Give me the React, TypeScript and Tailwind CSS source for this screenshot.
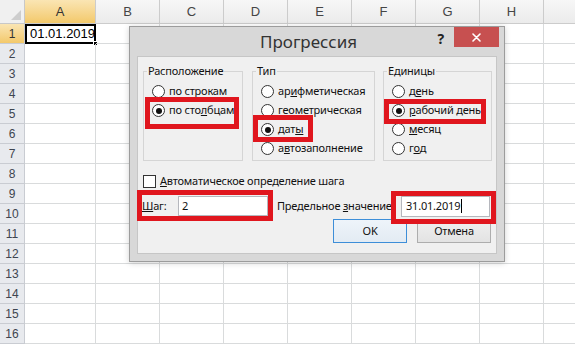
import React from 'react';

const cols = [
  { label: 'A', w: 'w-[71px]', sel: true },
  { label: 'B', w: 'w-[64px]' },
  { label: 'C', w: 'w-[64px]' },
  { label: 'D', w: 'w-[64px]' },
  { label: 'E', w: 'w-[64px]' },
  { label: 'F', w: 'w-[64px]' },
  { label: 'G', w: 'w-[64px]' },
  { label: 'H', w: 'w-[64px]' },
  { label: '', w: 'w-[64px]' },
];

function Sheet() {
  return (
    <div className="flex flex-col font-['Liberation_Sans',Arial,sans-serif]">
      <div className="flex h-[24px]">
        <div className="relative h-full w-[25px] shrink-0 border-r border-b border-[#c8c8c8] bg-[#f0f0f0]">
          <svg className="absolute right-[3px] bottom-[3px]" width="10" height="10" viewBox="0 0 10 10">
            <path d="M10 0 L10 10 L0 10 Z" fill="#cdcdcd" />
          </svg>
        </div>
        {cols.map((c, j) => (
          <div
            key={j}
            className={`${c.w} ${
              c.sel
                ? 'bg-linear-to-b from-[#fae5b3] to-[#f3c96a] text-[#333333]'
                : 'bg-linear-to-b from-[#f7f7f7] to-[#ebebeb] text-[#454545]'
            } flex h-full shrink-0 items-center justify-center border-r border-b border-[#cccccc] text-[13px]`}
          >
            {c.label}
          </div>
        ))}
      </div>
      {Array.from({ length: 16 }).map((_, i) => (
        <div key={i} className="flex h-[20px]">
          <div
            className={`flex h-full w-[25px] shrink-0 items-center justify-center border-r border-b border-[#c9ccd2] text-[12px] ${
              i === 0
                ? 'bg-linear-to-b from-[#fae5b3] to-[#f3c96a] text-[#333333]'
                : 'bg-[#e8eaee] text-[#3e4550]'
            }`}
          >
            {i + 1}
          </div>
          {cols.map((c, j) => (
            <div key={j} className={`${c.w} relative flex h-full shrink-0 items-center border-r border-b border-[#d9dbdc]`}>
              {i === 0 && j === 0 && (
                <>
                  <span className="pl-[5px] text-[13px] text-black">01.01.2019</span>
                  <div className="absolute left-0 top-0 -right-[1px] -bottom-[1px] border-2 border-black" />
                  <div className="absolute -right-[3px] -bottom-[3px] h-[5px] w-[5px] border border-white bg-black" />
                </>
              )}
            </div>
          ))}
        </div>
      ))}
    </div>
  );
}

function Radio({ checked }: { checked?: boolean }) {
  return (
    <span className="flex h-[13px] w-[13px] shrink-0 items-center justify-center rounded-full border border-[#333333] bg-white">
      {checked && <span className="h-[6px] w-[6px] rounded-full bg-[#111111]" />}
    </span>
  );
}

function Opt({ checked, children }: { checked?: boolean; children: React.ReactNode }) {
  return (
    <div className="flex h-[19px] items-center gap-[4px] pl-[8px]">
      <Radio checked={checked} />
      <span className="whitespace-nowrap">{children}</span>
    </div>
  );
}

function Group({ title, w, children }: { title: string; w: string; children: React.ReactNode }) {
  return (
    <fieldset className={`${w} h-[98px] shrink-0 border border-[#d5d5d5]`}>
      <legend className="ml-[3px] px-[1px] leading-[16px]">{title}</legend>
      <div className="pt-[3px]">{children}</div>
    </fieldset>
  );
}

function Dialog() {
  return (
    <div className="absolute left-[129px] top-[26px] flex h-[236px] w-[376px] flex-col border border-[#9c9c9c] bg-[#d8d8d8] font-['Noto_Sans',sans-serif] text-[11px] tracking-[-0.2px] text-[#111111] shadow-[0_1px_6px_rgba(0,0,0,0.18)]">
      <div className="flex h-[29px] shrink-0 items-start">
        <div className="ml-[130px] self-center text-[17px] leading-none tracking-normal text-[#333333]">Прогрессия</div>
        <div className="mt-[4px] ml-auto text-[14px] leading-[16px] font-bold text-[#222222]">?</div>
        <div className="mr-[5px] ml-[10px] flex h-[20px] w-[45px] items-center justify-center bg-[#c75050]">
          <svg width="9" height="9" viewBox="0 0 9 9">
            <path d="M1 1 L8 8 M8 1 L1 8" stroke="white" strokeWidth="1.6" strokeLinecap="round" />
          </svg>
        </div>
      </div>
      <div className="mx-[7px] mb-[7px] flex flex-1 flex-col border border-[#c6c6c6] bg-[#f0f0f0]">
        <div className="flex pt-[6px] pl-[5px]">
          <Group title="Расположение" w="w-[100px]">
            <Opt>по строкам</Opt>
            <Opt checked>
              по сто<span className="underline">л</span>бцам
            </Opt>
          </Group>
          <div className="ml-[9px]">
            <Group title="Тип" w="w-[123px]">
              <Opt>
                ар<span className="underline">и</span>фметическая
              </Opt>
              <Opt>геометрическая</Opt>
              <Opt checked>
                дат<span className="underline">ы</span>
              </Opt>
              <Opt>
                а<span className="underline">в</span>тозаполнение
              </Opt>
            </Group>
          </div>
          <div className="ml-[8px]">
            <Group title="Единицы" w="w-[109px]">
              <Opt>
                д<span className="underline">е</span>нь
              </Opt>
              <Opt checked>
                <span className="underline">р</span>абочий день
              </Opt>
              <Opt>
                <span className="underline">м</span>есяц
              </Opt>
              <Opt>
                г<span className="underline">о</span>д
              </Opt>
            </Group>
          </div>
        </div>
        <div className="mt-[12px] ml-[5px] flex h-[16px] items-center gap-[4px]">
          <span className="h-[13px] w-[13px] shrink-0 border border-[#333333] bg-white" />
          <span className="whitespace-nowrap">
            <span className="underline">А</span>втоматическое определение шага
          </span>
        </div>
        <div className="mt-[7px] flex h-[20px] items-center pl-[4px]">
          <span className="w-[36px] shrink-0">
            <span className="underline">Ш</span>аг:
          </span>
          <div className="flex h-[20px] w-[90px] shrink-0 items-center border border-[#b5b7bd] bg-white pl-[3px]">2</div>
          <span className="ml-[9px] w-[124px] shrink-0 whitespace-nowrap">
            Предельное <span className="underline">з</span>начение:
          </span>
          <div className="flex h-[21px] w-[89px] shrink-0 items-center border border-[#b5b7bd] bg-white pl-[4px]">
            31.01.2019
            <span className="ml-[1px] h-[14px] w-[1px] bg-black" />
          </div>
        </div>
        <div className="mt-[3px] flex justify-end gap-[10px] pr-[5px]">
          <div className="flex h-[24px] w-[74px] items-center justify-center border border-[#3d8ed8] bg-linear-to-b from-[#eef4fa] to-[#e3ebf3]">
            OK
          </div>
          <div className="flex h-[24px] w-[74px] items-center justify-center border border-[#adadad] bg-linear-to-b from-[#efefef] to-[#e3e3e3]">
            Отмена
          </div>
        </div>
      </div>
    </div>
  );
}

export default function App() {
  return (
    <div className="relative h-[345px] w-[575px] overflow-hidden bg-white">
      <Sheet />
      <Dialog />
      <div className="pointer-events-none absolute left-[145px] top-[97px] h-[32px] w-[94px] border-[5px] border-[#e0161e]" />
      <div className="pointer-events-none absolute left-[253px] top-[115px] h-[27px] w-[60px] border-[5px] border-[#e0161e]" />
      <div className="pointer-events-none absolute left-[384px] top-[99px] h-[25px] w-[102px] border-[5px] border-[#e0161e]" />
      <div className="pointer-events-none absolute left-[137px] top-[190px] h-[31px] w-[136px] border-[5px] border-[#e0161e]" />
      <div className="pointer-events-none absolute left-[391px] top-[191px] h-[33px] w-[105px] border-[5px] border-[#e0161e]" />
    </div>
  );
}
